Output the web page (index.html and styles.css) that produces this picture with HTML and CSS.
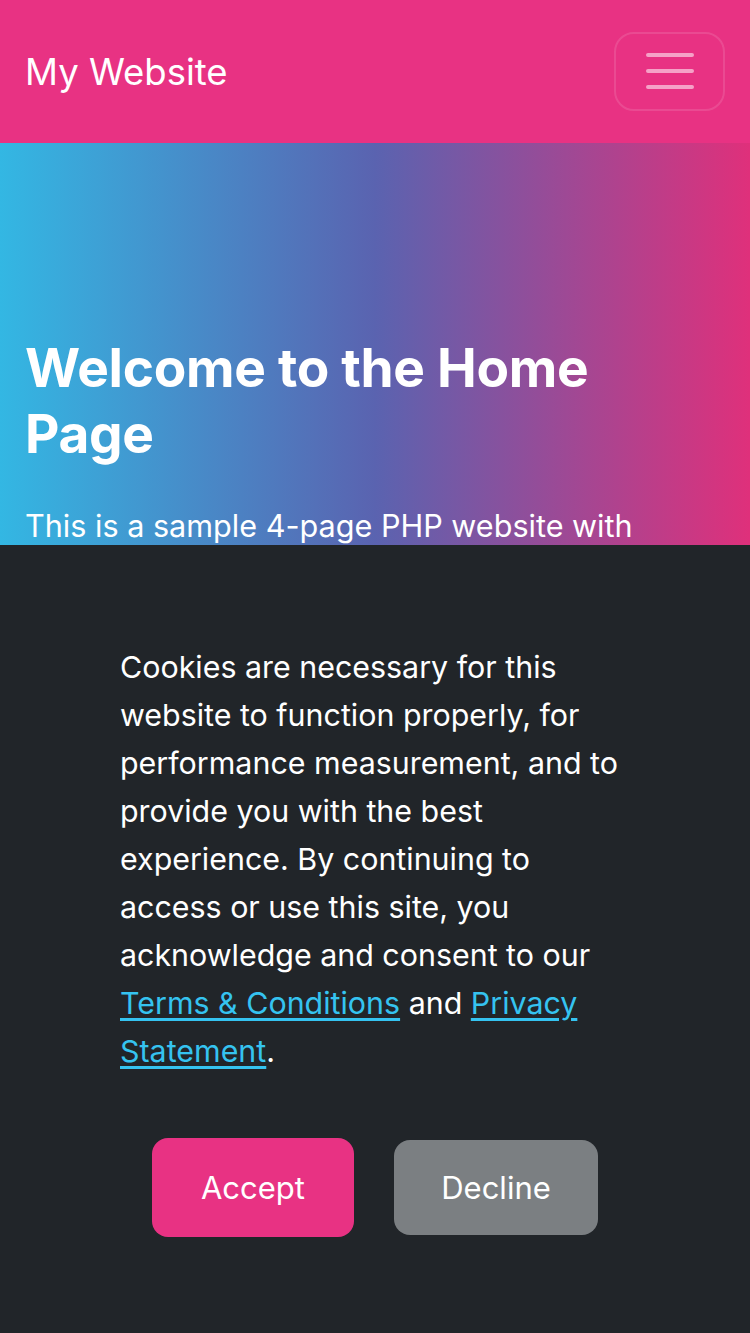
FILE: index.html
```html
<!DOCTYPE html>
<html lang="en">
<head>
<meta charset="utf-8">
<title>My Website</title>
<link rel="stylesheet" href="styles.css">
</head>
<body>
<nav class="navbar">
  <a class="brand" href="#">My Website</a>
  <button class="toggler" aria-label="Toggle navigation">
    <svg class="toggler-icon" width="48" height="36" viewBox="0 0 48 36">
      <path d="M2 2H46M2 18H46M2 34H46" stroke="rgba(255,255,255,0.55)" stroke-width="4" stroke-linecap="round" fill="none"/>
    </svg>
  </button>
</nav>
<header class="hero">
  <h1>Welcome to the Home Page</h1>
  <p>This is a sample 4-page PHP website with Bootstrap styling, a navigation menu and a cookie consent banner.</p>
</header>
<div class="cookie-banner">
  <p class="cookie-text">Cookies are necessary for this website to function properly, for performance measurement, and to provide you with the best experience. By continuing to access or use this site, you acknowledge and consent to our <a href="#">Terms &amp; Conditions</a> and <a href="#">Privacy Statement</a>.</p>
  <div class="cookie-actions">
    <button class="btn btn-accept">Accept</button>
    <button class="btn btn-decline">Decline</button>
  </div>
</div>
</body>
</html>
```
FILE: styles.css
```css
* { box-sizing: border-box; }
html, body { margin: 0; padding: 0; }
body {
  font-family: Inter, "Noto Sans", "Liberation Sans", sans-serif;
  color: #fff;
  background: #fff;
  height: 1333px;
  overflow: hidden;
}
.navbar {
  height: 143px;
  background: #e83283;
  display: flex;
  align-items: center;
  justify-content: space-between;
  padding: 0 25px 0 25px;
}
.brand {
  color: #fff;
  text-decoration: none;
  font-size: 36.5px;
  line-height: 1;
  margin-top: 2px;
}
.toggler {
  width: 111px;
  height: 79px;
  border: 2px solid rgba(255,255,255,0.12);
  border-radius: 20px;
  background: transparent;
  display: flex;
  align-items: center;
  justify-content: center;
  padding: 0;
  margin-top: -1px;
}
.toggler-icon { display: block; }
.hero {
  background: linear-gradient(to right, #33b7e3 0%, #5a63b0 50%, #df307b 100%);
  padding: 192px 25px 200px;
}
.hero h1 {
  margin: 0 0 35px;
  font-size: 53.2px;
  line-height: 66px;
  font-weight: 700;
  letter-spacing: -0.3px;
}
.hero p {
  margin: 0;
  font-size: 30.6px;
  line-height: 48px;
}
.cookie-banner {
  position: fixed;
  left: 0;
  right: 0;
  bottom: 0;
  height: 788px;
  background: #212529;
  padding: 98px 0 96px;
}
.cookie-text {
  width: 510px;
  margin: 0 auto;
  font-size: 30.4px;
  line-height: 48px;
}
.cookie-text a {
  color: #35c3f0;
  text-underline-offset: 4px;
}
.cookie-actions {
  display: flex;
  justify-content: center;
  align-items: center;
  gap: 40px;
  margin-top: 63px;
}
.btn {
  font-family: inherit;
  font-size: 31px;
  color: #fff;
  border: 0;
  border-radius: 16px;
  cursor: pointer;
}
.btn-accept {
  background: #e83283;
  width: 202px;
  height: 99px;
}
.btn-decline {
  background: #7b7f82;
  width: 204px;
  height: 95px;
}
```
